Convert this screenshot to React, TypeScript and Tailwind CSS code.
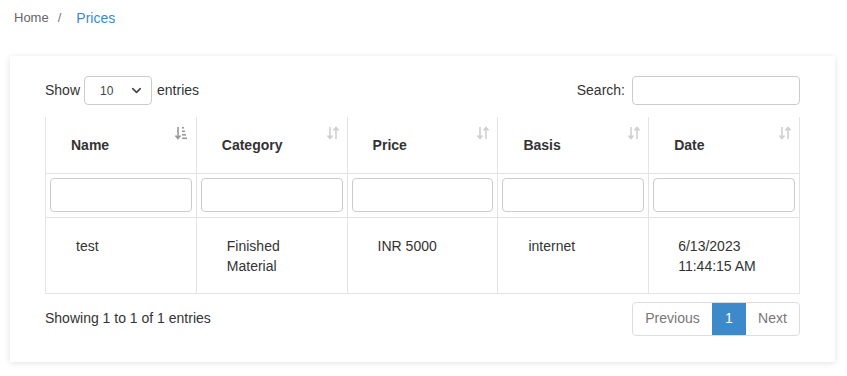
import { ChevronDown } from "lucide-react";

const columns = ["Name", "Category", "Price", "Basis", "Date"];

function SortBoth() {
  return (
    <svg width="12" height="14" viewBox="0 0 12 14" className="text-[#d0d0d0]">
      <path d="M3 1v11M0.5 9.5L3 12.5L5.5 9.5" stroke="currentColor" strokeWidth="1.6" fill="none" />
      <path d="M9 13V2M6.5 4.5L9 1.5L11.5 4.5" stroke="currentColor" strokeWidth="1.6" fill="none" />
    </svg>
  );
}

function SortAsc() {
  return (
    <svg width="13" height="14" viewBox="0 0 13 14" className="text-[#999]">
      <path d="M3 1v11M0.5 9.5L3 12.5L5.5 9.5" stroke="currentColor" strokeWidth="1.6" fill="none" />
      <rect x="7" y="1" width="2" height="1.6" fill="currentColor" />
      <rect x="7" y="4.5" width="3" height="1.6" fill="currentColor" />
      <rect x="7" y="8" width="4" height="1.6" fill="currentColor" />
      <rect x="7" y="11.5" width="5" height="1.6" fill="currentColor" />
    </svg>
  );
}

export default function App() {
  return (
    <div className="w-[847px] h-[376px] bg-white text-[14px] text-[#333] font-['Liberation_Sans',Arial,sans-serif] overflow-hidden">
      <div className="flex items-center h-[35px] pl-[14px] pt-[1px]">
        <span className="text-[13px] text-[#666]">Home</span>
        <span className="text-[13px] text-[#777] ml-[9px]">/</span>
        <span className="text-[14px] text-[#3c8ac9] ml-[15px]">Prices</span>
      </div>
      <div className="mt-[21px] mx-[10px] w-[825px] h-[306px] bg-white shadow-[0_1px_6px_rgba(0,0,0,0.12)] px-[35px] pt-[20px]">
        <div className="flex items-center justify-between h-[29px]">
          <div className="flex items-center">
            <span>Show</span>
            <div className="ml-[4px] w-[68px] h-[29px] border border-[#ccc] rounded-[4px] flex items-center justify-between pl-[15px] pr-[7px]">
              <span className="text-[12px] text-[#444]">10</span>
              <ChevronDown size={15} strokeWidth={2.5} className="text-[#444]" />
            </div>
            <span className="ml-[5px]">entries</span>
          </div>
          <div className="flex items-center">
            <span>Search:</span>
            <div className="ml-[7px] w-[168px] h-[29px] border border-[#ccc] rounded-[4px]" />
          </div>
        </div>
        <table className="mt-[12px] w-[755px] border-collapse table-fixed">
          <thead>
            <tr className="h-[56px]">
              {columns.map((c, i) => (
                <th key={c} className="relative border border-[#e3e3e3] border-t-0 text-left font-bold pl-[25px] pt-[2px] align-middle">
                  {c}
                  <span className="absolute right-[8px] top-[9px]">{i === 0 ? <SortAsc /> : <SortBoth />}</span>
                </th>
              ))}
            </tr>
          </thead>
          <tbody>
            <tr className="h-[44px]">
              {columns.map((c) => (
                <td key={c} className="border border-[#e3e3e3] px-[4px]">
                  <div className="h-[34px] border border-[#ccc] rounded-[4px]" />
                </td>
              ))}
            </tr>
            <tr className="h-[76px]">
              <td className="border border-[#e3e3e3] align-top pl-[30px] pt-[18px] leading-[20px]">test</td>
              <td className="border border-[#e3e3e3] align-top pl-[30px] pt-[18px] leading-[20px]">Finished<br />Material</td>
              <td className="border border-[#e3e3e3] align-top pl-[30px] pt-[18px] leading-[20px]">INR 5000</td>
              <td className="border border-[#e3e3e3] align-top pl-[30px] pt-[18px] leading-[20px]">internet</td>
              <td className="border border-[#e3e3e3] align-top pl-[29px] pt-[18px] leading-[20px]">6/13/2023<br />11:44:15 AM</td>
            </tr>
          </tbody>
        </table>
        <div className="flex items-center justify-between mt-[8px]">
          <span>Showing 1 to 1 of 1 entries</span>
          <div className="flex h-[34px] border border-[#ddd] rounded-[4px] overflow-hidden">
            <span className="w-[79px] flex items-center justify-center text-[#777]">Previous</span>
            <span className="w-[34px] flex items-center justify-center bg-[#3c8ac9] text-white">1</span>
            <span className="w-[53px] flex items-center justify-center text-[#777]">Next</span>
          </div>
        </div>
      </div>
    </div>
  );
}
